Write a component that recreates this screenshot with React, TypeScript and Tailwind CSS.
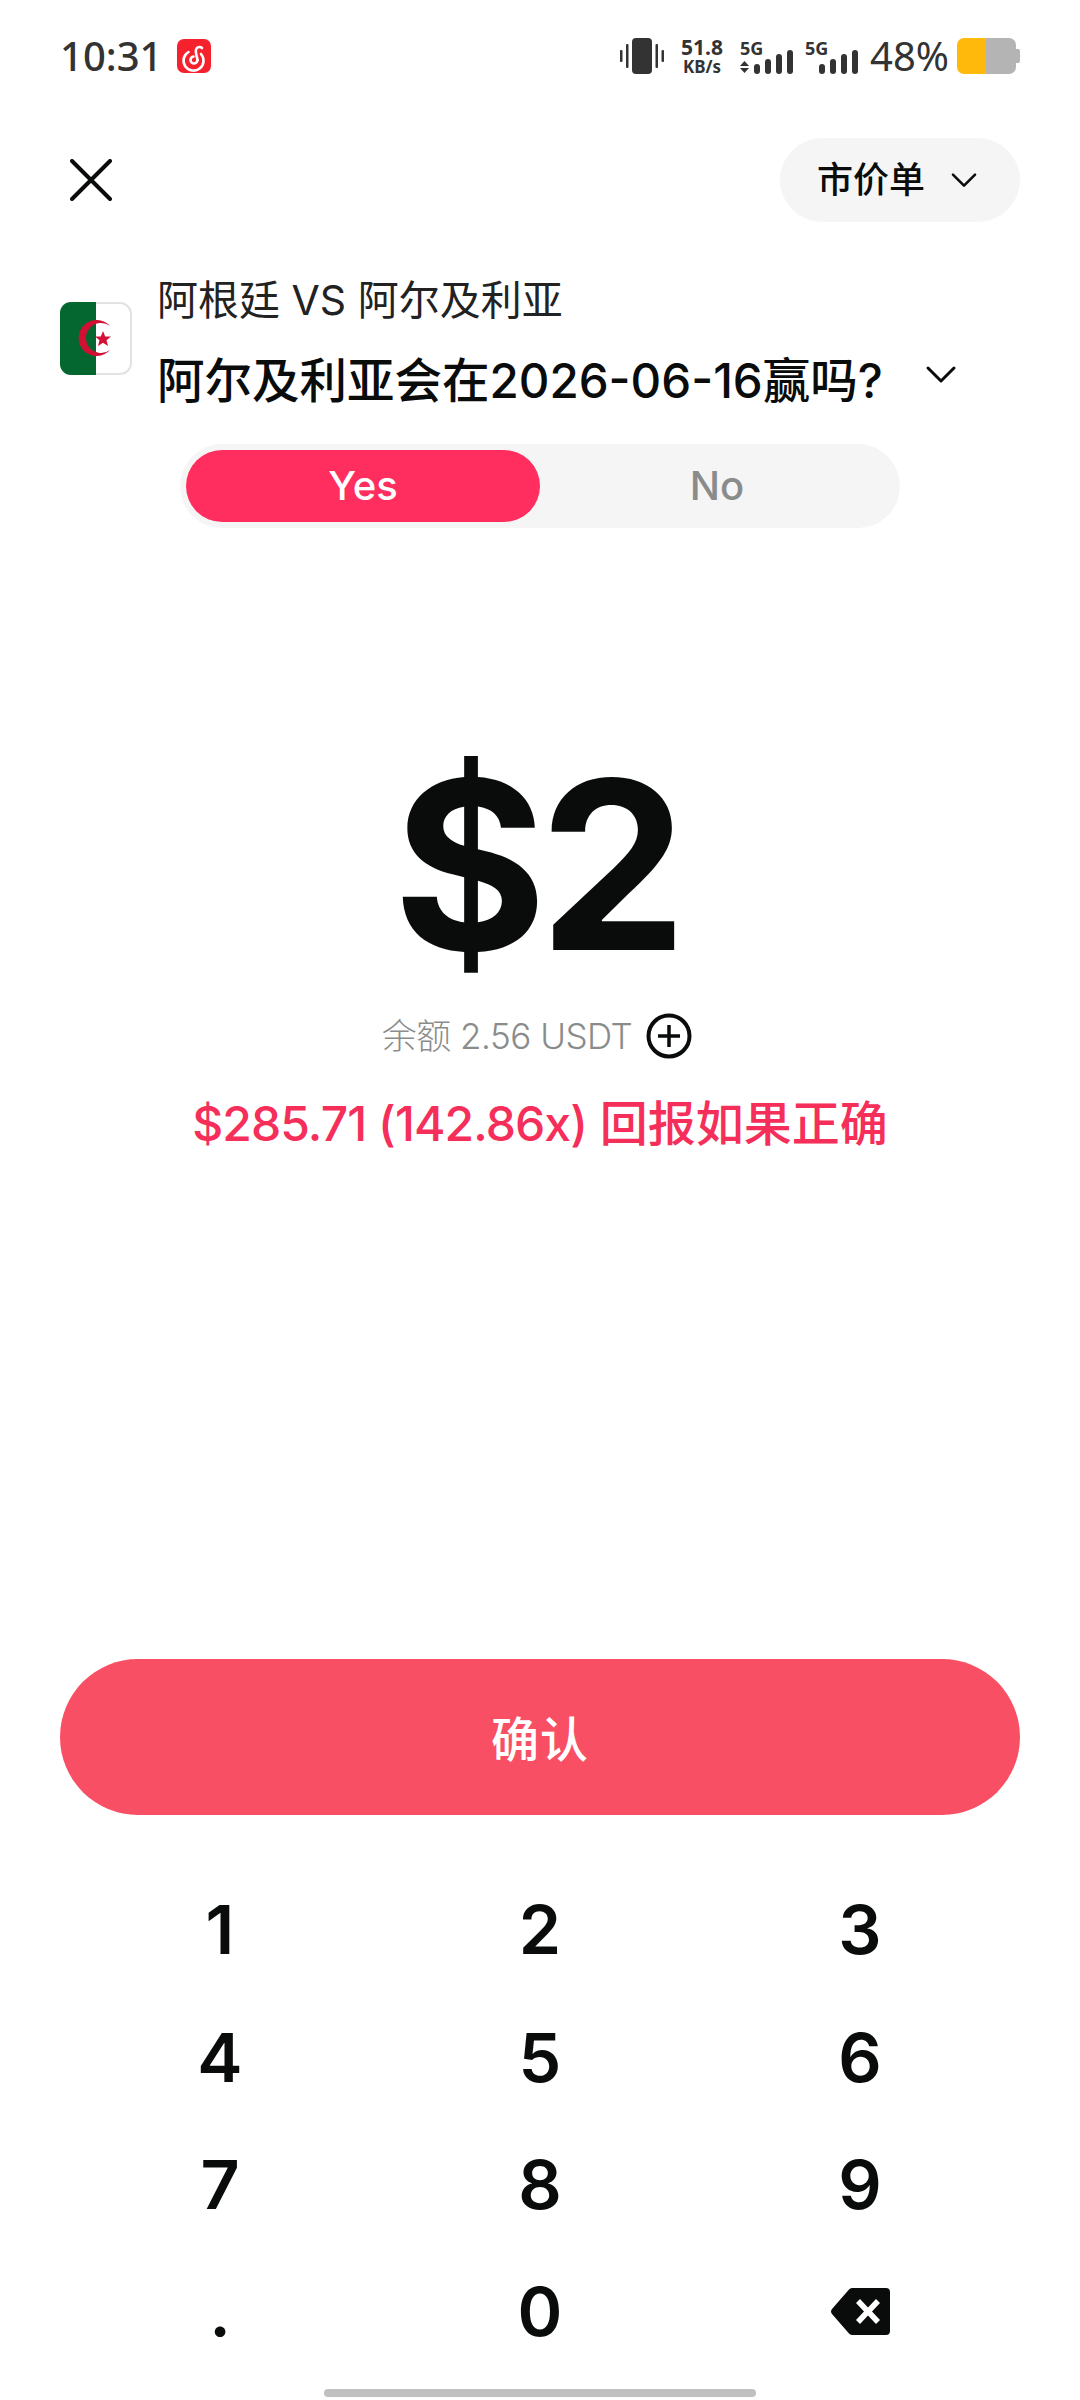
const keys = ["1", "2", "3", "4", "5", "6", "7", "8", "9", ".", "0"];

function Chevron({ className }: { className: string }) {
  return (
    <svg className={className} viewBox="0 0 32 20" fill="none" stroke="#0a0c0c" strokeWidth="3" strokeLinecap="round" strokeLinejoin="round">
      <path d="M3 3 L16 16 L29 3" />
    </svg>
  );
}

function Bars() {
  return (
    <svg className="h-[24px] w-[40px] shrink-0" viewBox="0 0 40 24" fill="#333">
      <rect x="0" y="14" width="6" height="10" rx="3" />
      <rect x="11" y="9" width="6" height="15" rx="3" />
      <rect x="22" y="4" width="6" height="20" rx="3" />
      <rect x="33" y="0" width="6" height="24" rx="3" />
    </svg>
  );
}

function Signal({ arrows }: { arrows?: boolean }) {
  return (
    <div className="flex h-[36px] w-[54px] items-end">
      <div className="flex h-full w-[14px] flex-col justify-between pt-[1px] pb-[1px]">
        <span className="text-[18px] leading-[18px] font-bold whitespace-nowrap">5G</span>
        {arrows && (
          <svg className="h-[12px] w-[9px]" viewBox="0 0 9 12" fill="#333">
            <path d="M4.5 0 L9 5 H0 Z M0 7 H9 L4.5 12 Z" />
          </svg>
        )}
      </div>
      <Bars />
    </div>
  );
}

function StatusBar() {
  return (
    <div className="flex h-[112px] items-center justify-between pl-[60px] text-[#333] font-['Noto_Sans',sans-serif]">
      <div className="flex items-center">
        <span className="text-[40px] leading-none font-medium">10:31</span>
        <svg className="ml-[15px] h-[34px] w-[34px]" viewBox="0 0 34 34" fill="none" stroke="#fff" strokeWidth="2.6" strokeLinecap="round">
          <rect width="34" height="34" rx="7" fill="#f5222d" stroke="none" />
          <path d="M11.5 13 A10 10 0 1 0 24 15" />
          <path d="M20.5 21 A3.5 3.5 0 1 1 16.5 17.5" />
          <path d="M20.5 21 C20 17 17.5 12 19.5 9.5 C21 7.5 23.5 7.5 25 9" />
        </svg>
      </div>
      <div className="flex items-center pr-[60px]">
        <svg className="h-[36px] w-[44px]" viewBox="0 0 44 36" fill="#333">
          <rect x="12" y="0" width="20" height="36" rx="4" />
          <rect x="0" y="12" width="2.5" height="12" rx="1" />
          <rect x="6" y="6" width="2.5" height="24" rx="1" />
          <rect x="35.5" y="6" width="2.5" height="24" rx="1" />
          <rect x="41.5" y="12" width="2.5" height="12" rx="1" />
        </svg>
        <div className="ml-[16px] flex w-[44px] flex-col items-center font-bold">
          <span className="text-[21px] leading-[21px]">51.8</span>
          <span className="text-[17px] leading-[18px]">KB/s</span>
        </div>
        <div className="ml-[16px]">
          <Signal arrows />
        </div>
        <div className="ml-[11px]">
          <Signal />
        </div>
        <span className="ml-[11px] text-[40px] leading-none">48%</span>
        <div className="ml-[8px] flex h-[36px] w-[63px] items-center">
          <div className="h-full w-[29px] rounded-l-[7px] bg-[#ffb90a]" />
          <div className="h-full w-[30px] rounded-r-[7px] bg-[#b4b4b4]" />
          <div className="h-[14px] w-[4px] rounded-r-[2px] bg-[#b4b4b4]" />
        </div>
      </div>
    </div>
  );
}

function Flag() {
  return (
    <svg className="mt-[26px] h-[73px] w-[72px] shrink-0" viewBox="0 0 72 73">
      <rect x="1" y="1" width="70" height="71" rx="11" fill="#fff" stroke="#e2e2e2" strokeWidth="2" />
      <path d="M36 0 H11 A11 11 0 0 0 0 11 V62 A11 11 0 0 0 11 73 H36 Z" fill="#04672f" />
      <path d="M50 24 A18 18 0 1 0 50 48 A15 15 0 1 1 50 24 Z" fill="#d21034" />
      <path d="M43 29 L45.2 34.5 L51 34.5 L46.5 38.2 L48 44 L43 40.8 L38 44 L39.5 38.2 L35 34.5 L40.8 34.5 Z" fill="#d21034" />
    </svg>
  );
}

export default function App() {
  return (
    <div className="flex h-[2400px] w-[1080px] flex-col overflow-hidden bg-white font-['Inter','Noto_Sans_CJK_SC',sans-serif] text-[#0a0c0c]">
      <StatusBar />

      <div className="mt-[26px] flex items-center justify-between px-[60px]">
        <svg className="ml-[10px] h-[42px] w-[42px]" viewBox="0 0 42 42" fill="none" stroke="#0a0c0c" strokeWidth="4" strokeLinecap="round">
          <path d="M2 2 L40 40 M40 2 L2 40" />
        </svg>
        <div className="flex h-[84px] w-[240px] items-center rounded-[42px] bg-[#f5f5f5] pl-[37px]">
          <span className="text-[36px] leading-none font-medium">市价单</span>
          <Chevron className="ml-[25px] h-[17px] w-[28px]" />
        </div>
      </div>

      <div className="mt-[54px] flex items-start pl-[60px]">
        <Flag />
        <div className="ml-[25px] flex flex-col">
          <span className="text-[41px] leading-[48px] text-[#222]">阿根廷 VS 阿尔及利亚</span>
          <div className="mt-[29px] flex items-center">
            <span className="text-[47.5px] leading-[56px] font-medium">阿尔及利亚会在2026-06-16赢吗?</span>
            <Chevron className="mt-[-12px] ml-[42px] h-[20px] w-[32px]" />
          </div>
        </div>
      </div>

      <div className="mx-auto mt-[35px] flex h-[84px] w-[720px] items-center rounded-[42px] bg-[#f5f5f5] p-[6px] text-[40px] font-medium">
        <div className="flex h-[72px] w-[354px] items-center justify-center rounded-[36px] bg-[#ff2e5f] text-white">Yes</div>
        <div className="flex h-[72px] w-[354px] items-center justify-center text-[#8a8c8c]">No</div>
      </div>

      <div className="mt-[197px] pr-[8px] text-center text-[235px] leading-[280px] font-bold tracking-[-8px]">$2</div>

      <div className="mt-[8px] flex items-center justify-center pr-[6px]">
        <span className="text-[35px] leading-[46px] font-light tracking-[-0.5px] text-[#8a8c8c]">余额 2.56 USDT</span>
        <svg className="ml-[14px] h-[46px] w-[46px]" viewBox="0 0 46 46" fill="none" stroke="#0a0c0c" strokeWidth="4">
          <circle cx="23" cy="23" r="20.5" />
          <path d="M23 12 V34 M12 23 H34" strokeWidth="3.5" />
        </svg>
      </div>

      <div className="mt-[35px] text-center text-[48px] leading-[60px] font-medium text-[#f52f5a]">
        <span className="tracking-[-0.9px]">$285.71 (142.86x)</span> 回报如果正确
      </div>

      <button className="mx-auto mt-auto flex h-[156px] w-[960px] items-center justify-center rounded-[78px] bg-[#f94f64] pt-[6px] text-[48px] font-medium tracking-[1px] text-white">
        确认
      </button>

      <div className="mt-[51px] mb-[14px] grid auto-rows-[127.3px] grid-cols-3 px-[60px] text-[68px] font-semibold">
        {keys.map((k) => (
          <div key={k} className="flex items-center justify-center">{k}</div>
        ))}
        <div className="flex items-center justify-center">
          <svg className="h-[47px] w-[59px]" viewBox="0 0 59 47">
            <path
              fill="#0a0c0c"
              fillRule="evenodd"
              d="M21 0 H55 A4 4 0 0 1 59 4 V43 A4 4 0 0 1 55 47 H21 A4 4 0 0 1 18 45.5 L1 26 A4 4 0 0 1 1 21 L18 1.5 A4 4 0 0 1 21 0 Z M29 11 L25 15 L33 23.5 L25 32 L29 36 L37 27.5 L45 36 L49 32 L41 23.5 L49 15 L45 11 L37 19.5 Z"
            />
          </svg>
        </div>
      </div>

      <div className="mx-auto mb-[3px] h-[8px] w-[432px] rounded-[4px] bg-[#c0c0c0]" />
    </div>
  );
}
